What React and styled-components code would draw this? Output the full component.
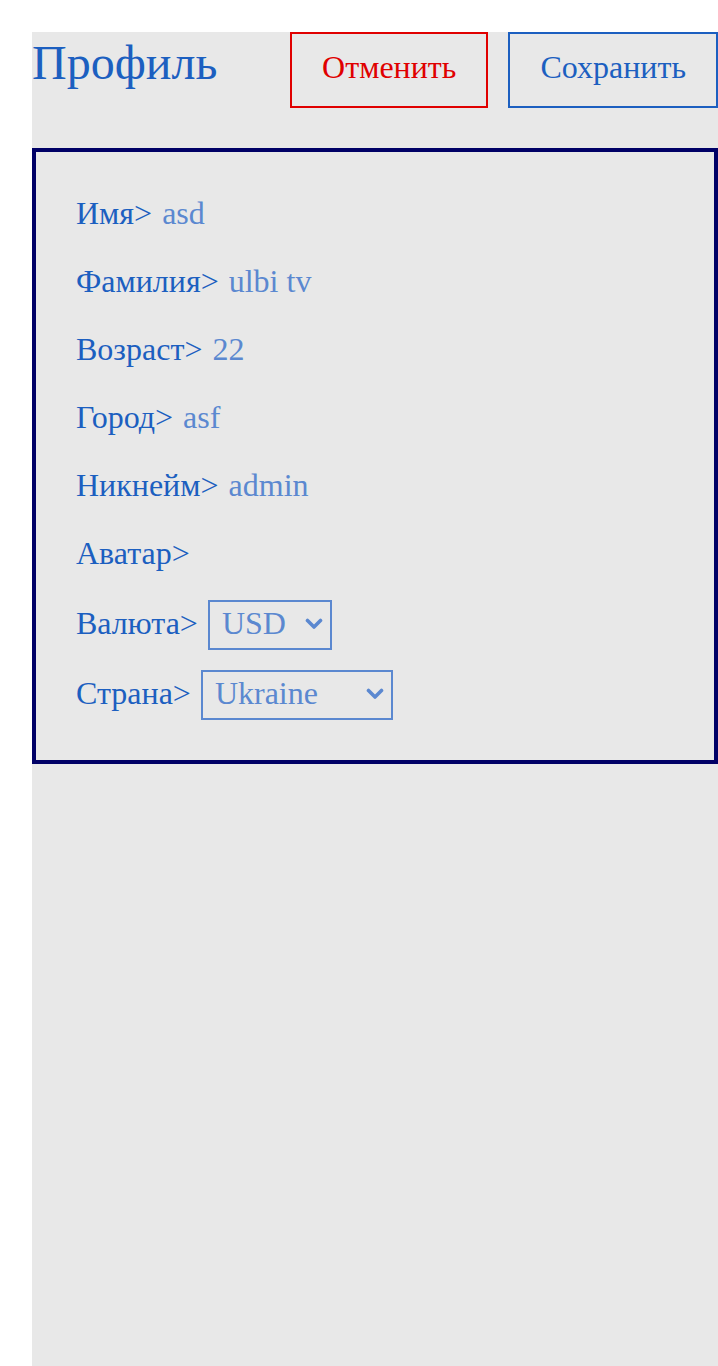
import React from 'react';
import styled, { createGlobalStyle } from 'styled-components';

const GlobalStyle = createGlobalStyle`
  body {
    margin: 0;
    background: #ffffff;
    font-family: "Liberation Serif", "Times New Roman", serif;
  }
`;

const Page = styled.div`
  padding: 32px 0 0 32px;
  min-height: 100vh;
  box-sizing: border-box;
`;

const Content = styled.div`
  background: #e8e8e8;
  min-height: calc(100vh - 32px);
`;

const Header = styled.div`
  display: flex;
  justify-content: space-between;
  align-items: flex-start;
  height: 76px;
`;

const Title = styled.h1`
  margin: 0;
  font-size: 48px;
  font-weight: 400;
  color: #1c5fc0;
  line-height: 62px;
`;

const Buttons = styled.div`
  display: flex;
  gap: 20px;
`;

const Button = styled.button`
  height: 76px;
  padding: 0 30px 6px;
  background: transparent;
  border: 2px solid ${props => (props.$danger ? '#e00000' : '#1c5fc0')};
  color: ${props => (props.$danger ? '#e00000' : '#1c5fc0')};
  font-family: "Liberation Serif", "Times New Roman", serif;
  font-size: 32px;
  cursor: pointer;
`;

const Card = styled.div`
  margin-top: 40px;
  border: 4px solid #000066;
  padding: 37px 40px 40px;
  display: flex;
  flex-direction: column;
  gap: 20px;
`;

const SelectGroup = styled.div`
  margin-top: 3px;
  display: flex;
  flex-direction: column;
  gap: 20px;
`;

const Row = styled.div`
  display: flex;
  align-items: center;
  min-height: 48px;
  gap: 10px;
`;

const Label = styled.span`
  font-size: 32px;
  color: #1c5fc0;
  margin-bottom: ${props => (props.$select ? '4px' : '0')};
`;

const Input = styled.input`
  border: none;
  background: transparent;
  outline: none;
  padding: 0;
  font-family: "Liberation Serif", "Times New Roman", serif;
  font-size: 32px;
  color: #5b88d0;
  width: 300px;
`;

const SelectWrap = styled.div`
  position: relative;
  display: inline-flex;
`;

const Select = styled.select`
  appearance: none;
  width: ${props => props.$width}px;
  height: 50px;
  border: 2px solid #5b88d0;
  border-radius: 0;
  background: transparent;
  padding: 0 30px 4px 12px;
  font-family: "Liberation Serif", "Times New Roman", serif;
  font-size: 32px;
  color: #5b88d0;
  outline: none;
  cursor: pointer;
`;

const Chevron = styled.svg`
  position: absolute;
  right: 9px;
  top: 18px;
  width: 18px;
  height: 12px;
  pointer-events: none;
`;

const ChevronIcon = () => (
  <Chevron viewBox="0 0 18 12">
    <path d="M2.5 2.5 L9 9 L15.5 2.5" fill="none" stroke="#5b88d0" strokeWidth="3.6" strokeLinecap="round" strokeLinejoin="round" />
  </Chevron>
);

const fields = [
  { label: 'Имя', value: 'asd' },
  { label: 'Фамилия', value: 'ulbi tv' },
  { label: 'Возраст', value: '22' },
  { label: 'Город', value: 'asf' },
  { label: 'Никнейм', value: 'admin' },
  { label: 'Аватар', value: '' },
];

export default function App() {
  return (
    <>
      <GlobalStyle />
      <Page>
        <Content>
          <Header>
            <Title>Профиль</Title>
            <Buttons>
              <Button $danger>Отменить</Button>
              <Button>Сохранить</Button>
            </Buttons>
          </Header>
          <Card>
            {fields.map(f => (
              <Row key={f.label}>
                <Label>{f.label}&gt;</Label>
                <Input defaultValue={f.value} readOnly />
              </Row>
            ))}
            <SelectGroup>
              <Row>
                <Label $select>Валюта&gt;</Label>
                <SelectWrap>
                  <Select $width={124} defaultValue="USD">
                    <option>RUB</option>
                    <option>EUR</option>
                    <option>USD</option>
                  </Select>
                  <ChevronIcon />
                </SelectWrap>
              </Row>
              <Row>
                <Label $select>Страна&gt;</Label>
                <SelectWrap>
                  <Select $width={192} defaultValue="Ukraine">
                    <option>Russia</option>
                    <option>Belarus</option>
                    <option>Ukraine</option>
                    <option>Kazakhstan</option>
                    <option>Armenia</option>
                  </Select>
                  <ChevronIcon />
                </SelectWrap>
              </Row>
            </SelectGroup>
          </Card>
        </Content>
      </Page>
    </>
  );
}
